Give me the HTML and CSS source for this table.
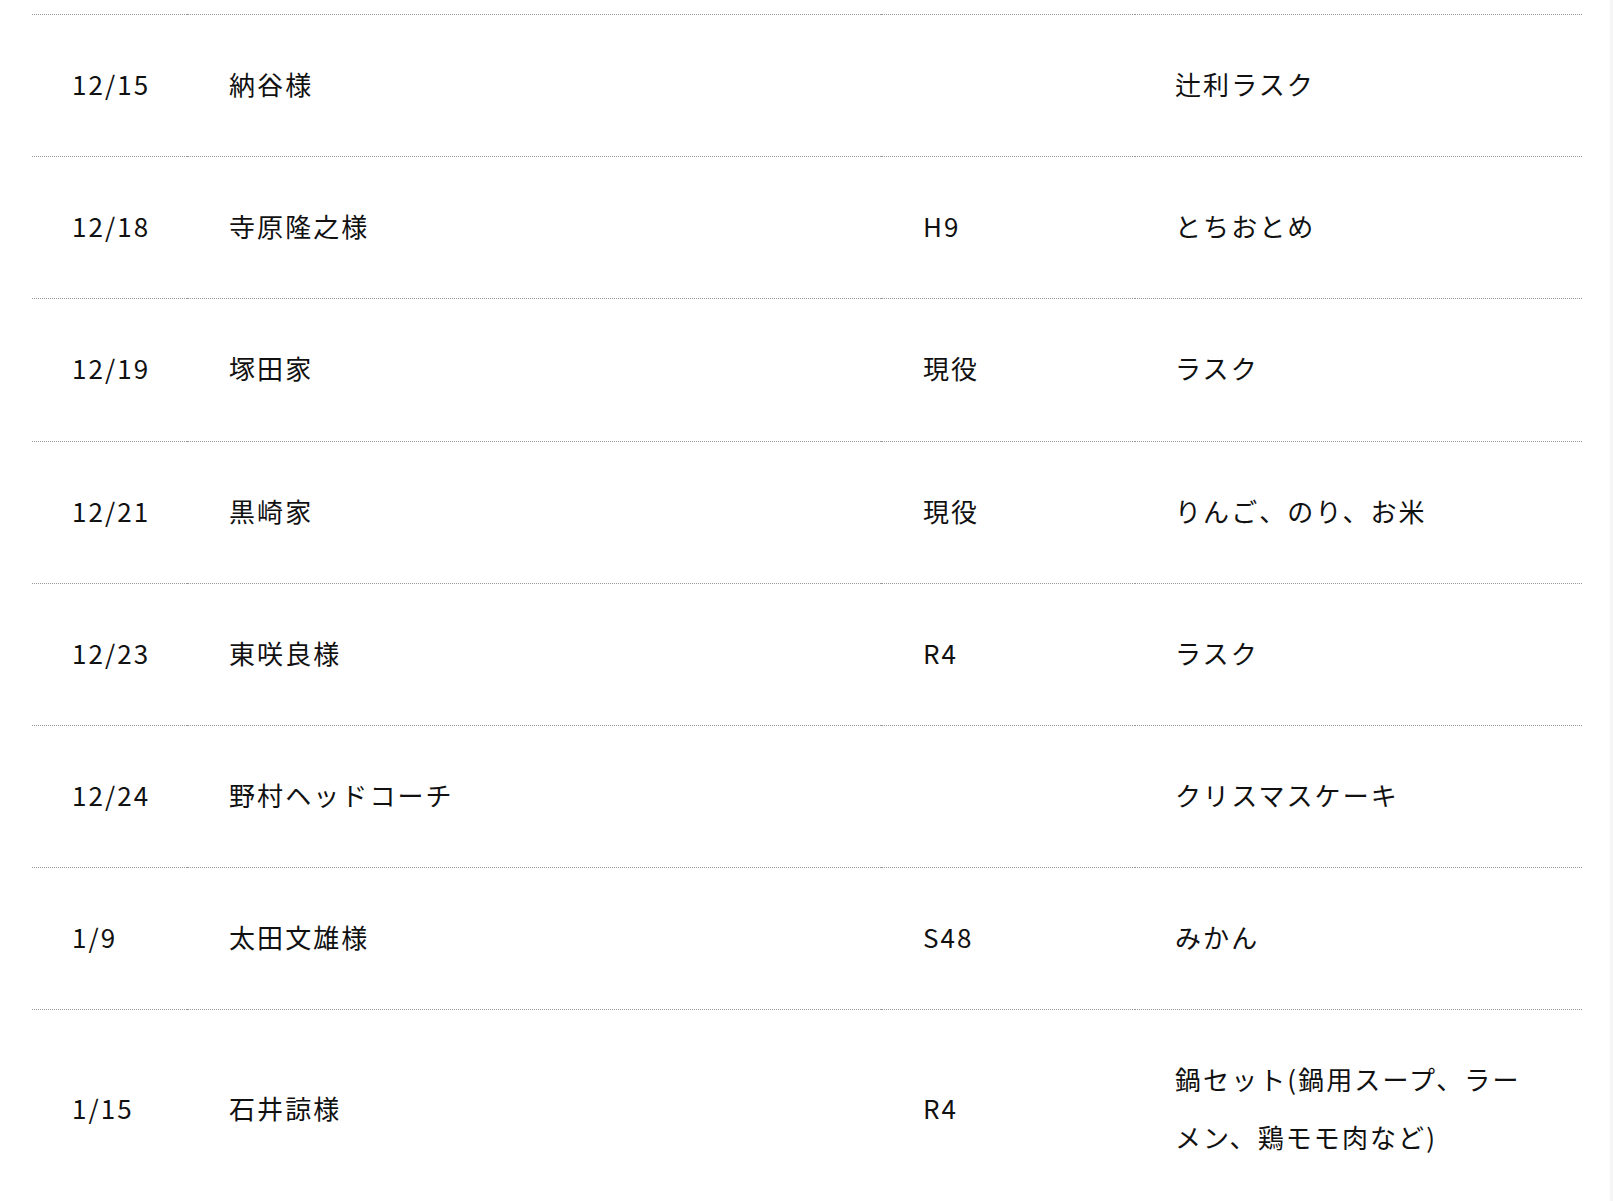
FILE: index.html
```html
<!DOCTYPE html>
<html lang="ja">
<head>
<meta charset="utf-8">
<title>お礼一覧</title>
<link rel="stylesheet" href="styles.css">
</head>
<body>
<div class="page">
  <table class="gifts">
    <colgroup>
      <col class="c-date">
      <col class="c-name">
      <col class="c-year">
      <col class="c-item">
    </colgroup>
    <tbody>
      <tr><td>12/15</td><td>納谷様</td><td></td><td>辻利ラスク</td></tr>
      <tr><td>12/18</td><td>寺原隆之様</td><td>H9</td><td>とちおとめ</td></tr>
      <tr><td>12/19</td><td>塚田家</td><td>現役</td><td>ラスク</td></tr>
      <tr><td>12/21</td><td>黒崎家</td><td>現役</td><td>りんご、のり、お米</td></tr>
      <tr><td>12/23</td><td>東咲良様</td><td>R4</td><td>ラスク</td></tr>
      <tr><td>12/24</td><td>野村ヘッドコーチ</td><td></td><td>クリスマスケーキ</td></tr>
      <tr><td>1/9</td><td>太田文雄様</td><td>S48</td><td>みかん</td></tr>
      <tr><td>1/15</td><td>石井諒様</td><td>R4</td><td>鍋セット(鍋用スープ、ラーメン、鶏モモ肉など)</td></tr>
    </tbody>
  </table>
</div>
</body>
</html>
```
FILE: styles.css
```css
html, body {
  margin: 0;
  padding: 0;
  background: #fff;
}
.page {
  box-sizing: border-box;
  min-height: 100vh;
  padding: 14px 28px 0 32px;
  border-right: 3px solid #f6f6f6;
  overflow: hidden;
}
.gifts {
  width: 100%;
  table-layout: fixed;
  border-collapse: collapse;
  font-family: "Noto Sans CJK JP", "Noto Sans", sans-serif;
  font-size: 26px;
  letter-spacing: 0.08em;
  line-height: 2.2;
  color: #111;
}
.c-date { width: 155px; }
.c-name { width: 694px; }
.c-year { width: 254px; }
.c-item { width: auto; }
.gifts td {
  border-top: 1px dotted #999;
  padding: 40px 40px 44px;
  vertical-align: middle;
  text-align: left;
}
.gifts td:nth-child(2),
.gifts td:nth-child(3) {
  padding-left: 42px;
}
```
